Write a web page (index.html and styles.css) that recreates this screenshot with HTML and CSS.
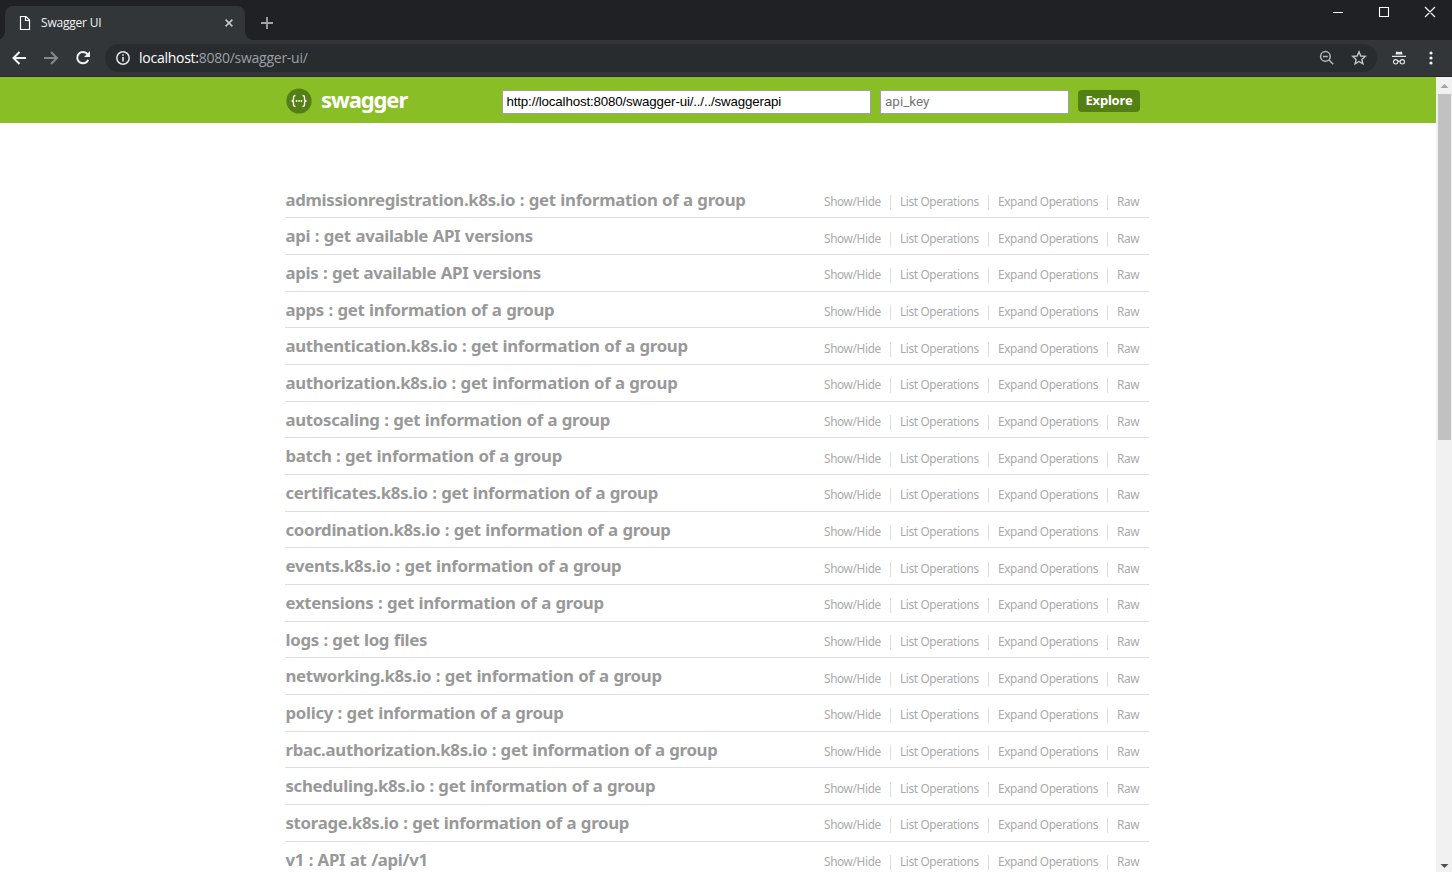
FILE: index.html
```html
<!DOCTYPE html>
<html lang="en">
<head>
<meta charset="utf-8">
<title>Swagger UI</title>
<link rel="stylesheet" href="styles.css">
</head>
<body>
<div class="tabstrip">
  <div class="tab">
    <svg class="page-icon" width="12" height="16" viewBox="0 0 12 16"><path d="M1.5 1.5H7L10.5 5V14.5H1.5Z M6.5 1.5V5.5H10.5" fill="none" stroke="#fff" stroke-width="1.2"/></svg>
    <span class="tab-title">Swagger UI</span>
    <svg class="tab-close" width="10" height="10" viewBox="0 0 10 10"><path d="M1.6 1.6L8.4 8.4M8.4 1.6L1.6 8.4" stroke="#c8cacc" stroke-width="1.5"/></svg>
  </div>
  <svg class="new-tab" width="14" height="14" viewBox="0 0 14 14"><path d="M7 1V13M1 7H13" stroke="#a0a3a7" stroke-width="1.8"/></svg>
  <svg class="window-buttons" width="104" height="12" viewBox="0 0 104 12"><path d="M0 6.5H10M46.5 1.5H55.5V10.5H46.5Z M92 1L102 11M102 1L92 11" fill="none" stroke="#fff" stroke-width="1.1"/></svg>
</div>
<div class="toolbar">
  <svg class="nav-icons" width="80" height="16" viewBox="0 0 80 16"><g fill="none" stroke-width="2"><path d="M15 8H2.500M8.500 2L2.500 8L8.500 14" stroke="#f1f3f4"/><path d="M33 8H46M40 2L46 8L40 14" stroke="#85888b"/><path d="M76.500 4.200A5.700 5.700 0 1 0 77.200 9.800" stroke="#f1f3f4"/></g><path d="M79 1V7H73Z" fill="#f1f3f4"/></svg>
  <div class="address">
    <svg width="16" height="16" viewBox="0 0 16 16"><circle cx="8" cy="8" r="6.2" fill="none" stroke="#e3e5e6" stroke-width="1.5"/><path d="M8 7V11.5M8 4.2V5.8" stroke="#e3e5e6" stroke-width="1.6"/></svg>
    <span class="url">localhost:<span class="url-path">8080/swagger-ui/</span></span>
    <svg class="zoom-icon" width="16" height="16" viewBox="0 0 16 16"><g fill="none" stroke="#b4b7ba" stroke-width="1.5"><circle cx="6.4" cy="6.4" r="4.8"/><path d="M4 6.4H8.8M10 10L14.2 14.2"/></g></svg>
    <svg width="16" height="16" viewBox="0 0 16 16"><path d="M8 1.8L9.8 6L14.2 6.4L10.900 9.400L11.900 13.800L8 11.500L4.100 13.800L5.100 9.400L1.800 6.400L6.200 6Z" fill="none" stroke="#c3c6c8" stroke-width="1.4"/></svg>
  </div>
  <svg class="incognito" width="14" height="14" viewBox="0 0 14 14"><path d="M4.200 0.500L7 1L9.800 0.500L10.500 3.500H3.500Z M0 4.700H14V6H0Z" fill="#e4e6e7"/><g fill="none" stroke="#e4e6e7" stroke-width="1.1"><circle cx="3.700" cy="10.800" r="2.200"/><circle cx="10.300" cy="10.800" r="2.200"/><path d="M6 10.500Q7 9.800 8 10.500"/></g></svg>
  <svg class="menu-dots" width="4" height="14" viewBox="0 0 4 14"><g fill="#f1f3f4"><circle cx="2" cy="2" r="1.6"/><circle cx="2" cy="7" r="1.6"/><circle cx="2" cy="12" r="1.6"/></g></svg>
</div>
<div class="viewport">
  <div class="page">
    <header class="header">
      <svg class="logo" width="26" height="26" viewBox="0 0 26 26"><circle cx="13" cy="13" r="12.6" fill="#547f14"/><g fill="none" stroke="#fff" stroke-width="1.3"><path d="M9.500 7.500Q7.500 7.500 7.500 9.500V11Q7.500 13 5.500 13Q7.500 13 7.500 15V16.500Q7.500 18.500 9.500 18.500M16.500 7.500Q18.500 7.500 18.500 9.500V11Q18.500 13 20.500 13Q18.500 13 18.500 15V16.500Q18.500 18.500 16.500 18.500"/></g><g fill="#fff"><circle cx="10.500" cy="13" r="0.900"/><circle cx="13" cy="13" r="0.900"/><circle cx="15.500" cy="13" r="0.900"/></g></svg>
      <span class="brand">swagger</span>
      <input class="field base-url" type="text" value="http://localhost:8080/swagger-ui/../../swaggerapi">
      <input class="field api-key" type="text" placeholder="api_key">
      <a class="explore">Explore</a>
    </header>
    <ul class="resources" id="resources"></ul>
  </div>
  <div class="scrollbar">
    <svg width="16" height="17" viewBox="0 0 16 17"><path d="M4.500 11L8.500 7L12.500 11Z" fill="#a3a3a3"/></svg>
    <div class="thumb"></div>
    <svg class="scroll-down" width="16" height="17" viewBox="0 0 16 17"><path d="M4.500 9L8.500 13L12.500 9Z" fill="#505050"/></svg>
  </div>
</div>
<script src="app.js"></script>
</body>
</html>
```
FILE: styles.css
```css
* { box-sizing: border-box; }
body { margin: 0; height: 872px; overflow: hidden; background: #fff; font-family: "Noto Sans", sans-serif; }
svg { display: block; flex: none; }

.tabstrip { height: 40px; display: flex; background: #202124; padding-left: 5px; }
.tab { width: 240px; height: 34px; margin-top: 6px; padding: 0 11px 0 14px; display: flex; align-items: center; background: #323639; border-radius: 8px 8px 0 0; position: relative; }
.tab::before, .tab::after { content: ""; position: absolute; bottom: 0; width: 8px; height: 8px; }
.tab::before { left: -8px; background: radial-gradient(circle at 0 0, transparent 7.5px, #323639 8px); }
.tab::after { right: -8px; background: radial-gradient(circle at 100% 0, transparent 7.5px, #323639 8px); }
.tab-title { margin: -1px 0 0 10px; font-family: "Open Sans", sans-serif; font-size: 12px; letter-spacing: -0.2px; color: #f1f3f4; }
.tab-close { margin-left: auto; }
.new-tab { margin: 16px 0 0 15px; }
.window-buttons { margin: 6px 15px 0 auto; }

.toolbar { height: 37px; display: flex; align-items: center; background: #323639; border-bottom: 1px solid #28292b; padding-left: 11px; }
.nav-icons { margin-right: 14px; }
.address { width: 1272px; height: 28px; padding: 0 10px; display: flex; align-items: center; border-radius: 14px; background: #282c2f; }
.url { margin-left: 8px; font-family: "Open Sans", sans-serif; font-size: 14px; line-height: 20px; letter-spacing: -0.26px; color: #fff; }
.url-path { color: #9aa0a6; }
.zoom-icon { margin: 0 16px 0 auto; }
.incognito { margin-left: 15px; }
.menu-dots { margin-left: 23px; }

.viewport { height: 795px; display: flex; }
.page { width: 1436px; overflow: hidden; }
.header { height: 46px; display: flex; padding-left: 286px; background: #8abe26; }
.logo { margin-top: 11px; }
.brand { width: 181px; margin: 7px 0 0 9px; font-size: 22px; line-height: 31px; font-weight: 700; letter-spacing: -1.1px; color: #fff; }
.field { height: 24px; margin-top: 13px; border: 1px solid #a0a0a0; background: #fff; color: #000; outline: 0; }
.base-url { width: 369px; padding: 0 3.5px 2px; font: 13.33px "Liberation Sans", Arial, sans-serif; letter-spacing: -0.155px; }
.api-key { width: 189px; margin-left: 9px; padding: 0 4px 2px; font: 13.5px Roboto, sans-serif; }
.field::placeholder { color: #757575; }
.explore { width: 62px; height: 22px; margin: 13px 0 0 9px; border-radius: 4px; background: #547f14; color: #fff; font-size: 13px; line-height: 21px; font-weight: 700; text-align: center; letter-spacing: -0.2px; }

.resources { list-style: none; width: 864px; margin: 58.72px 0 0 285px; padding: 0; }
.resource { height: 36.675px; display: flex; justify-content: space-between; border-bottom: 1px solid #ddd; white-space: nowrap; }
.resource h2 { margin: 6.9px 0 0 0.5px; font-size: 16.8px; line-height: 22px; font-weight: 700; letter-spacing: -0.3px; word-spacing: 0.5px; color: #999; }
.options { display: flex; list-style: none; margin: 13.3px 0 0; padding: 0; }
.options li { height: 15px; padding-left: 9px; border-left: 1px solid #ddd; font-size: 11.8px; line-height: 13px; letter-spacing: -0.35px; color: #aaa; }
.options li:nth-child(1) { width: 76px; border-color: transparent; }
.options li:nth-child(2) { width: 98px; }
.options li:nth-child(3) { width: 119px; }
.options li:nth-child(4) { width: 42px; }

.scrollbar { width: 16px; display: flex; flex-direction: column; background: #f1f1f1; }
.thumb { width: 13px; height: 346px; margin-left: 2px; background: #c1c1c1; }
.scroll-down { margin-top: auto; }
```
FILE: app.js
```js
// Titles of the API resources, each with the same set of actions.
const group = " : get information of a group";
const resources = [
  "admissionregistration.k8s.io" + group,
  "api : get available API versions",
  "apis : get available API versions",
  "apps" + group,
  "authentication.k8s.io" + group,
  "authorization.k8s.io" + group,
  "autoscaling" + group,
  "batch" + group,
  "certificates.k8s.io" + group,
  "coordination.k8s.io" + group,
  "events.k8s.io" + group,
  "extensions" + group,
  "logs : get log files",
  "networking.k8s.io" + group,
  "policy" + group,
  "rbac.authorization.k8s.io" + group,
  "scheduling.k8s.io" + group,
  "storage.k8s.io" + group,
  "v1 : API at /api/v1"
];
const options = ["Show/Hide", "List Operations", "Expand Operations", "Raw"];
document.getElementById("resources").innerHTML = resources.map(title =>
  `<li class="resource"><h2>${title}</h2><ul class="options">${options.map(o => `<li>${o}</li>`).join("")}</ul></li>`
).join("");
```
